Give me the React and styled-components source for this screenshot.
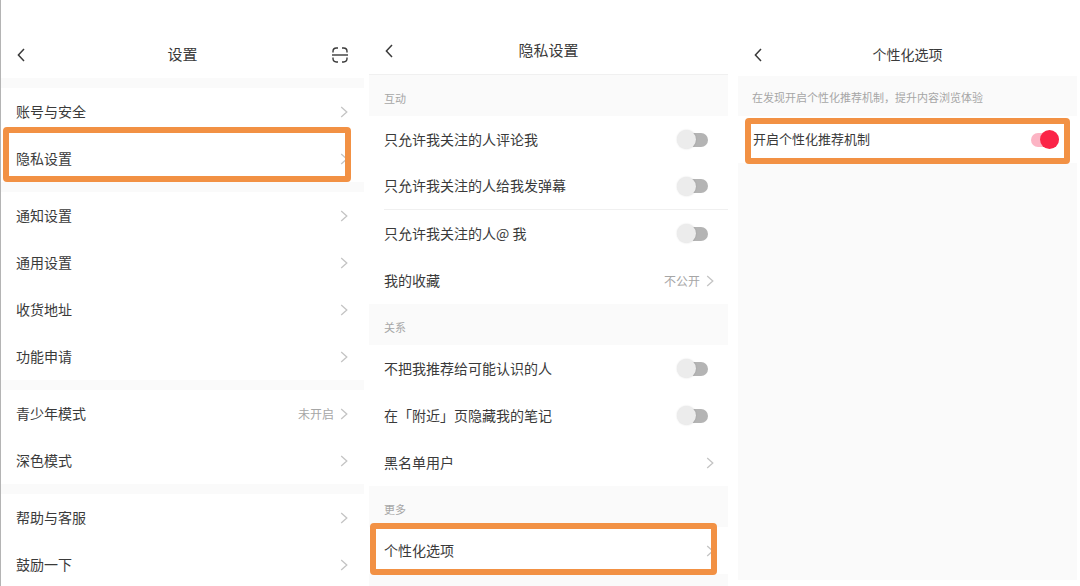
import React from 'react';
import styled, { createGlobalStyle, css } from "styled-components";

const settingGroups = [
  [{ label: "账号与安全" }, { label: "隐私设置", marked: true }],
  [
    { label: "通知设置" },
    { label: "通用设置" },
    { label: "收货地址" },
    { label: "功能申请" },
  ],
  [{ label: "青少年模式", value: "未开启" }, { label: "深色模式" }],
  [{ label: "帮助与客服" }, { label: "鼓励一下" }],
];

const privacySections = [
  {
    title: "互动",
    rows: [
      { label: "只允许我关注的人评论我", toggle: true },
      { label: "只允许我关注的人给我发弹幕", toggle: true, line: true },
      { label: "只允许我关注的人@ 我", toggle: true },
      { label: "我的收藏", value: "不公开" },
    ],
  },
  {
    title: "关系",
    rows: [
      { label: "不把我推荐给可能认识的人", toggle: true },
      { label: "在「附近」页隐藏我的笔记", toggle: true },
      { label: "黑名单用户" },
    ],
  },
  {
    title: "更多",
    rows: [{ label: "个性化选项", marked: true }],
  },
];

function Chevron() {
  return (
    <svg width="8" height="12" viewBox="0 0 8 12" fill="none" stroke="#c4c4c4" strokeWidth="1.3">
      <path d="M1.2 1 L6.8 6 L1.2 11" />
    </svg>
  );
}

function BackIcon() {
  return (
    <svg width="8" height="14" viewBox="0 0 8 14" fill="none" stroke="#3a3a3a" strokeWidth="1.5">
      <path d="M7 1 L1.4 7 L7 13" />
    </svg>
  );
}

function ScanIcon() {
  return (
    <svg width="16" height="16" viewBox="0 0 16 16" fill="none" stroke="#3a3a3a" strokeWidth="1.4">
      <path d="M1 5.6 V4.4 Q1 1 4.4 1 H6" />
      <path d="M10 1 H11.6 Q15 1 15 4.4 V5.6" />
      <path d="M1 10.4 V11.6 Q1 15 4.4 15 H6" />
      <path d="M10 15 H11.6 Q15 15 15 11.6 V10.4" />
      <path d="M0 8 H16" />
    </svg>
  );
}

function Header({ title, children, ...rest }) {
  return (
    <Bar {...rest}>
      <IconButton type="button" aria-label="返回"><BackIcon /></IconButton>
      <h1>{title}</h1>
      {children}
    </Bar>
  );
}

function LinkItem({ item }) {
  return (
    <RowLink href="#" $line={item.line}>
      <span>{item.label}</span>
      {item.value && <Value>{item.value}</Value>}
      <Chevron />
    </RowLink>
  );
}

function ToggleItem({ item }) {
  return (
    <RowLabel $line={item.line}>
      <span>{item.label}</span>
      <Switch type="checkbox" defaultChecked={item.on} />
    </RowLabel>
  );
}

function App() {
  return (
    <>
      <GlobalStyle />
      <Page>
        <SettingsPanel>
          <Header title="设置" $height={78} $top={31}>
            <IconButton type="button" aria-label="扫一扫"><ScanIcon /></IconButton>
          </Header>
          {settingGroups.map((group) => (
            <Group key={group[0].label}>
              {group.map((item) => (
                <li key={item.label}>
                  <LinkItem item={item} />
                  {item.marked && <Marker $inset="-8px 13px 0 2px" />}
                </li>
              ))}
            </Group>
          ))}
        </SettingsPanel>

        <PrivacyPanel>
          <Header title="隐私设置" $height={75} $top={28} $line />
          {privacySections.map((section) => (
            <section key={section.title}>
              <SectionTitle>{section.title}</SectionTitle>
              <List>
                {section.rows.map((item) => (
                  <li key={item.label}>
                    {item.toggle ? <ToggleItem item={item} /> : <LinkItem item={item} />}
                    {item.marked && <Marker $inset="-4px 11px -1px 1px" />}
                  </li>
                ))}
              </List>
            </section>
          ))}
        </PrivacyPanel>

        <OptionsPanel>
          <Header title="个性化选项" $height={76} $top={34} $small />
          <Note>在发现开启个性化推荐机制，提升内容浏览体验</Note>
          <List $small>
            <li>
              <ToggleItem item={{ label: "开启个性化推荐机制", on: true }} />
              <Marker $inset="2px 7px -1px 7px" />
            </li>
          </List>
        </OptionsPanel>
      </Page>
    </>
  );
}

const GlobalStyle = createGlobalStyle`
  * {
    box-sizing: border-box;
    margin: 0;
    padding: 0;
  }
  body {
    background: #fff;
    color: #3a3a3a;
    font-family: "Noto Sans CJK SC", "Liberation Sans", sans-serif;
    font-size: 14px;
    line-height: 20px;
  }
`;

const Page = styled.main`
  display: grid;
  grid-template-columns: 364fr 359fr 344fr;
  gap: 5px;
  height: 100vh;
  padding-right: 3px;
  overflow: hidden;
`;

const Panel = styled.section`
  display: flex;
  flex-direction: column;
  background: #fafafa;
`;

const SettingsPanel = styled(Panel)`
  border-left: 1px solid #b4b4b4;
`;

const PrivacyPanel = styled(Panel)``;

const OptionsPanel = styled(Panel)`
  margin: 0 0 8px 5px;
`;

const Bar = styled.header`
  display: grid;
  grid-template-columns: 24px 1fr 24px;
  align-items: center;
  flex: none;
  height: ${({ $height }) => $height}px;
  padding: ${({ $top }) => $top}px 12px 0;
  background: #fff;
  border-bottom: ${({ $line }) => ($line ? "1px solid #f0f0f0" : "none")};
  h1 {
    padding-bottom: 2px;
    font-size: ${({ $small }) => ($small ? 14 : 15)}px;
    font-weight: 400;
    text-align: center;
  }
`;

const IconButton = styled.button`
  display: flex;
  align-items: center;
  padding: 4px;
  border: none;
  background: none;
`;

const List = styled.ul`
  list-style: none;
  background: #fff;
  font-size: ${({ $small }) => ($small ? 13 : 14)}px;
  li {
    position: relative;
  }
`;

const Group = styled(List)`
  margin-top: 10px;
`;

const row = css`
  display: flex;
  align-items: center;
  gap: 6px;
  height: 47px;
  margin-left: 15px;
  color: inherit;
  text-decoration: none;
  border-bottom: ${({ $line }) => ($line ? "1px solid #f0f0f0" : "none")};
  span:first-child {
    flex: 1;
    padding-bottom: 2px;
  }
`;

const RowLink = styled.a`
  ${row}
  padding-right: 14px;
  ${SettingsPanel} & {
    padding-right: 16px;
  }
`;

const RowLabel = styled.label`
  ${row}
  padding-right: 20px;
  ${OptionsPanel} & {
    padding-right: 18px;
  }
`;

const Value = styled.span`
  color: #a6a6a6;
  font-size: 12px;
`;

const SectionTitle = styled.h2`
  padding: 13px 15px 8px;
  color: #a6a6a6;
  font-size: 11px;
  font-weight: 400;
`;

const Note = styled.p`
  padding: 11px 0 9px 14px;
  color: #a6a6a6;
  font-size: 11px;
  white-space: nowrap;
`;

const Switch = styled.input`
  appearance: none;
  display: flex;
  align-items: center;
  width: 26px;
  height: 14px;
  background: #b4b4b4;
  border-radius: 7px;
  &::before {
    content: "";
    flex: none;
    width: 19px;
    height: 19px;
    margin-left: -5px;
    border-radius: 50%;
    background: #ececec;
    box-shadow: 0 0 2px rgba(0, 0, 0, 0.15);
  }
  &:checked {
    justify-content: flex-end;
    width: 28px;
    background: #fcb4c4;
  }
  &:checked::before {
    background: #fb2347;
    box-shadow: none;
  }
`;

/* orange frame lying over a row */
const Marker = styled.div`
  position: absolute;
  inset: ${({ $inset }) => $inset};
  border: 6px solid #f29144;
  border-radius: 4px;
  pointer-events: none;
`;

export default App;
